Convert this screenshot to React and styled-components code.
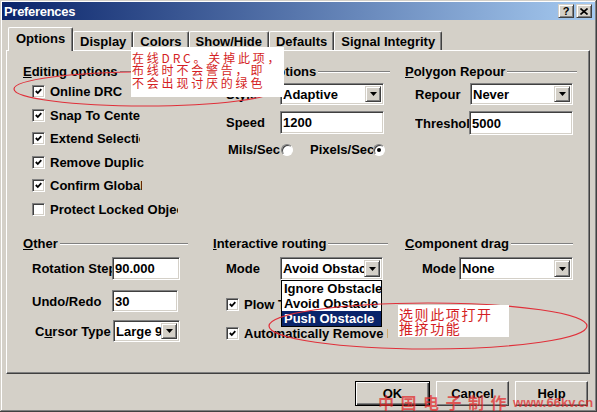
import styled, { createGlobalStyle, css } from "styled-components";

const GlobalStyle = createGlobalStyle`
  html, body { margin: 0; padding: 0; background: #d4d0c8; }
  body { font-family: "Liberation Sans", Arial, sans-serif; overflow: hidden; }
  * { box-sizing: border-box; }
`;

const sunken = css`
  border: 1px solid;
  border-color: #808080 #ffffff #ffffff #808080;
  box-shadow: inset 1px 1px #404040, inset -1px -1px #d4d0c8;
`;

const raised = css`
  border: 1px solid;
  border-color: #d4d0c8 #404040 #404040 #d4d0c8;
  box-shadow: inset 1px 1px #ffffff, inset -1px -1px #808080;
`;

const Window = styled.div`
  position: relative;
  width: 597px;
  height: 412px;
  padding: 2px;
  background: #d4d0c8;
  box-shadow: inset -1px -1px #404040, inset 1px 1px #d4d0c8,
    inset -2px -2px #808080, inset 2px 2px #ffffff;
  display: flex;
  flex-direction: column;
  font-size: 13px;
  font-weight: bold;
  color: #000;
`;

const TitleBar = styled.div`
  height: 18px;
  display: flex;
  align-items: center;
  justify-content: space-between;
  padding: 0 3px 0 2px;
  background: linear-gradient(90deg, #0a246a 0%, #a6caf0 100%);
  color: #fff;
`;

const Title = styled.span`
  font-size: 13px;
  letter-spacing: -0.3px;
`;

const TitleButtons = styled.div`
  display: flex;
  gap: 2px;
`;

const TitleButton = styled.div`
  width: 16px;
  height: 14px;
  background: #d4d0c8;
  ${raised};
  display: flex;
  align-items: center;
  justify-content: center;
  color: #000;
  font-size: 11px;
`;

const TabStrip = styled.div`
  height: 23px;
  margin-top: 7px;
  padding-left: 6px;
  display: flex;
  align-items: flex-end;
  position: relative;
  z-index: 1;
`;

const Tab = styled.div`
  height: ${(p) => (p.$active ? 24 : 19)}px;
  margin-bottom: ${(p) => (p.$active ? -1 : 0)}px;
  padding: ${(p) => (p.$active ? "0 7px 2px 7px" : "0 6px")};
  display: flex;
  align-items: center;
  background: #d4d0c8;
  border-top: 1px solid #fff;
  border-left: 1px solid #fff;
  border-right: 1px solid #404040;
  box-shadow: inset -1px 0 #808080;
  border-radius: 2px 2px 0 0;
  white-space: nowrap;
`;

const Panel = styled.div`
  height: 324px;
  margin: 0 5px 0 4px;
  border: 1px solid;
  border-color: #fff #404040 #404040 #fff;
  box-shadow: inset -1px -1px #808080;
  padding: 13px 0 0 16px;
  display: grid;
  grid-template-columns: 190px 192px 1fr;
  grid-template-rows: 172px 1fr;
`;

const Group = styled.div`
  display: flex;
  flex-direction: column;
  padding-left: ${(p) => p.$indent}px;
`;

const GroupHeader = styled.div`
  height: 14px;
  display: flex;
  align-items: center;
  margin-left: ${(p) => -p.$indent}px;
  white-space: nowrap;
  &::after {
    content: "";
    flex: 1;
    height: 0;
    border-top: 1px solid #808080;
    border-bottom: 1px solid #fff;
    margin: 1px ${(p) => p.$trim}px 0 2px;
  }
`;

const Row = styled.div`
  display: flex;
  align-items: center;
  height: ${(p) => p.$h}px;
  margin-top: ${(p) => p.$top}px;
  position: relative;
`;

const Label = styled.span`
  width: ${(p) => p.$w}px;
  margin-left: ${(p) => p.$shift || 0}px;
  flex: none;
  overflow: hidden;
  white-space: nowrap;
`;

const TextBox = styled.div`
  width: ${(p) => p.$w}px;
  height: 100%;
  background: #fff;
  ${sunken};
  padding: 0 0 0 2px;
  display: flex;
  align-items: center;
  white-space: nowrap;
  overflow: hidden;
  flex: none;
`;

const Select = styled.div`
  width: ${(p) => p.$w}px;
  height: 100%;
  background: #fff;
  ${sunken};
  padding: 2px;
  display: flex;
  align-items: stretch;
  flex: none;
  position: relative;
`;

const SelectText = styled.span`
  flex: 1;
  overflow: hidden;
  white-space: nowrap;
  display: flex;
  align-items: center;
`;

const DropButton = styled.span`
  width: 16px;
  flex: none;
  background: #d4d0c8;
  ${raised};
  display: flex;
  align-items: center;
  justify-content: center;
`;

const DropList = styled.div`
  position: absolute;
  top: calc(100% + 1px);
  left: 0;
  width: 100%;
  background: #fff;
  border: 1px solid #000;
  z-index: 2;
`;

const DropItem = styled.div`
  height: 15px;
  padding-left: 2px;
  display: flex;
  align-items: center;
  white-space: nowrap;
  overflow: hidden;
  background: ${(p) => (p.$on ? "#0a246a" : "#fff")};
  color: ${(p) => (p.$on ? "#fff" : "#000")};
`;

const CheckList = styled.div`
  display: flex;
  flex-direction: column;
  gap: 10.6px;
  margin-top: 7px;
`;

const CheckRow = styled.div`
  display: flex;
  align-items: center;
  gap: 5px;
  height: 13px;
  margin-top: ${(p) => p.$top || 0}px;
`;

const CheckBox = styled.span`
  width: 13px;
  height: 13px;
  flex: none;
  background: #fff;
  ${sunken};
  display: flex;
  align-items: center;
  justify-content: center;
`;

const Radio = styled.span`
  width: 12px;
  height: 12px;
  flex: none;
  border-radius: 50%;
  background: #fff;
  border: 1px solid;
  border-color: #808080 #fff #fff #808080;
  box-shadow: inset 1px 1px #404040;
  display: flex;
  align-items: center;
  justify-content: center;
  &::after {
    content: "";
    width: 4px;
    height: 4px;
    border-radius: 50%;
    background: ${(p) => (p.$on ? "#000" : "transparent")};
  }
`;

const Gap = styled.span`
  width: ${(p) => p.$w}px;
  flex: none;
`;

const ButtonRow = styled.div`
  display: flex;
  justify-content: flex-end;
  gap: 6px;
  margin-top: 7px;
  padding-right: 7px;
`;

const Button = styled.div`
  width: ${(p) => p.$w}px;
  height: 25px;
  display: flex;
  align-items: center;
  justify-content: center;
  background: #d4d0c8;
  ${(p) =>
    p.$default
      ? css`
          border: 1px solid #000;
          box-shadow: inset 1px 1px #fff, inset -1px -1px #404040,
            inset -2px -2px #808080;
        `
      : css`
          border: 1px solid;
          border-color: #fff #404040 #404040 #fff;
          box-shadow: inset -1px -1px #808080;
        `}
`;

const Marks = styled.svg`
  position: absolute;
  left: 0;
  top: 0;
  pointer-events: none;
  z-index: 3;
`;

const noteBox = css`
  position: absolute;
  background: #fff;
  color: #d41e24;
  font-family: "Noto Sans CJK SC", "Liberation Serif", sans-serif;
  font-weight: normal;
  white-space: nowrap;
  z-index: 4;
  display: flex;
  flex-direction: column;
`;

const DrcNote = styled.div`
  ${noteBox};
  left: 131px;
  top: 47px;
  width: 153px;
  height: 50px;
  padding: 4px 0 0 1px;
  font-size: 12px;
  letter-spacing: 2.8px;
`;

const PushNote = styled.div`
  ${noteBox};
  left: 398px;
  top: 305px;
  width: 111px;
  height: 32px;
  padding: 2px 0 0 1px;
  font-size: 14px;
  letter-spacing: 1.6px;
`;

const NoteLine = styled.div`
  height: ${(p) => p.$h}px;
  display: flex;
  align-items: center;
`;

const Watermark = styled.div`
  position: absolute;
  left: 378px;
  top: 390px;
  z-index: 4;
  display: flex;
  align-items: center;
  color: rgba(226, 40, 40, 0.72);
  white-space: nowrap;
  pointer-events: none;
`;

const WatermarkHan = styled.span`
  font-family: "Noto Sans CJK SC", sans-serif;
  font-size: 16px;
  font-weight: bold;
  letter-spacing: 6.5px;
`;

const WatermarkUrl = styled.span`
  font-size: 13px;
  font-weight: bold;
`;

const Arrow = () => (
  <svg width="7" height="4" viewBox="0 0 7 4">
    <polygon points="0,0 7,0 3.5,4" fill="#000" />
  </svg>
);

const Tick = () => (
  <svg width="7" height="7" viewBox="0 0 7 7">
    <polyline points="0.8,3 2.8,5 6.3,1.2" fill="none" stroke="#000" strokeWidth="1.8" />
  </svg>
);

const Check = ({ on, label, w, top }) => (
  <CheckRow $top={top}>
    <CheckBox>{on && <Tick />}</CheckBox>
    <Label $w={w}>{label}</Label>
  </CheckRow>
);

const Combo = ({ w, value, children }) => (
  <Select $w={w}>
    <SelectText>{value}</SelectText>
    <DropButton>
      <Arrow />
    </DropButton>
    {children}
  </Select>
);

const editing = [
  { label: "Online DRC", on: true, w: 90 },
  { label: "Snap To Center", on: true, w: 90 },
  { label: "Extend Selection", on: true, w: 90 },
  { label: "Remove Duplicates", on: true, w: 94 },
  { label: "Confirm Global Edit", on: true, w: 92 },
  { label: "Protect Locked Objects", on: false, w: 128 },
];

const tabs = ["Options", "Display", "Colors", "Show/Hide", "Defaults", "Signal Integrity"];

export default function App() {
  return (
    <>
      <GlobalStyle />
      <Window>
        <TitleBar>
          <Title>Preferences</Title>
          <TitleButtons>
            <TitleButton>?</TitleButton>
            <TitleButton>
              <svg width="8" height="7" viewBox="0 0 8 7">
                <path d="M0.5 0.5 L7.5 6.5 M7.5 0.5 L0.5 6.5" stroke="#000" strokeWidth="1.6" />
              </svg>
            </TitleButton>
          </TitleButtons>
        </TitleBar>

        <TabStrip>
          {tabs.map((t, i) => (
            <Tab key={t} $active={i === 0}>
              {t}
            </Tab>
          ))}
        </TabStrip>

        <Panel>
          <Group $indent={9}>
            <GroupHeader $indent={9} $trim={8}>
              <u>E</u>diting options
            </GroupHeader>
            <CheckList>
              {editing.map((c) => (
                <Check key={c.label} on={c.on} label={c.label} w={c.w} />
              ))}
            </CheckList>
          </Group>

          <Group $indent={13}>
            <GroupHeader $indent={13} $trim={15}>
              <u>A</u>utopan options
            </GroupHeader>
            <Row $h={22} $top={5}>
              <Label $w={54}>Style</Label>
              <Combo w={104} value="Adaptive" />
            </Row>
            <Row $h={23} $top={6}>
              <Label $w={54}>Speed</Label>
              <TextBox $w={104}>1200</TextBox>
            </Row>
            <Row $h={13} $top={9}>
              <Label $w={53} $shift={2}>Mils/Sec</Label>
              <Radio />
              <Gap $w={17} />
              <Label $w={63}>Pixels/Sec</Label>
              <Radio $on />
            </Row>
          </Group>

          <Group $indent={10}>
            <GroupHeader $indent={10} $trim={12}>
              <u>P</u>olygon Repour
            </GroupHeader>
            <Row $h={22} $top={5}>
              <Label $w={55}>Repour</Label>
              <Combo w={103} value="Never" />
            </Row>
            <Row $h={24} $top={6}>
              <Label $w={54}>Threshold</Label>
              <TextBox $w={104}>5000</TextBox>
            </Row>
          </Group>

          <Group $indent={9}>
            <GroupHeader $indent={9} $trim={25}>
              <u>O</u>ther
            </GroupHeader>
            <Row $h={23} $top={7}>
              <Label $w={80}>Rotation Step</Label>
              <TextBox $w={68}>90.000</TextBox>
            </Row>
            <Row $h={22} $top={10}>
              <Label $w={80}>Undo/Redo</Label>
              <TextBox $w={66}>30</TextBox>
            </Row>
            <Row $h={22} $top={8}>
              <Label $w={78} $shift={3}>
                C<u>u</u>rsor Type
              </Label>
              <Combo w={67} value="Large 90" />
            </Row>
          </Group>

          <Group $indent={13}>
            <GroupHeader $indent={13} $trim={17}>
              <u>I</u>nteractive routing
            </GroupHeader>
            <Row $h={23} $top={7}>
              <Label $w={54}>Mode</Label>
              <Combo w={103} value="Avoid Obstacle">
                <DropList>
                  <DropItem>Ignore Obstacle</DropItem>
                  <DropItem>Avoid Obstacle</DropItem>
                  <DropItem $on>Push Obstacle</DropItem>
                </DropList>
              </Combo>
            </Row>
            <Check on label="Plow Through Polygons" w={134} top={18} />
            <Check on label="Automatically Remove Loops" w={144} top={16} />
          </Group>

          <Group $indent={17}>
            <GroupHeader $indent={17} $trim={16}>
              <u>C</u>omponent drag
            </GroupHeader>
            <Row $h={23} $top={7}>
              <Label $w={37}>Mode</Label>
              <Combo w={114} value="None" />
            </Row>
          </Group>
        </Panel>

        <ButtonRow>
          <Button $w={75} $default>
            OK
          </Button>
          <Button $w={73}>Cancel</Button>
          <Button $w={73}>Help</Button>
        </ButtonRow>

        <Marks width="597" height="412" viewBox="0 0 597 412">
          <ellipse cx="145" cy="89" rx="131" ry="17" fill="none" stroke="#e0303a" strokeWidth="1.2" />
          <ellipse cx="428" cy="326" rx="159" ry="23" fill="none" stroke="#e0303a" strokeWidth="1.2" />
        </Marks>

        <DrcNote>
          <NoteLine $h={12.6}>在线DRC。关掉此项，</NoteLine>
          <NoteLine $h={12.6}>布线时不会警告，即</NoteLine>
          <NoteLine $h={12.6}>不会出现讨厌的绿色</NoteLine>
        </DrcNote>

        <PushNote>
          <NoteLine $h={14}>选则此项打开</NoteLine>
          <NoteLine $h={14}>推挤功能</NoteLine>
        </PushNote>

        <Watermark>
          <WatermarkHan>中国电子制作</WatermarkHan>
          <WatermarkUrl>www.66kv.cn</WatermarkUrl>
        </Watermark>
      </Window>
    </>
  );
}
